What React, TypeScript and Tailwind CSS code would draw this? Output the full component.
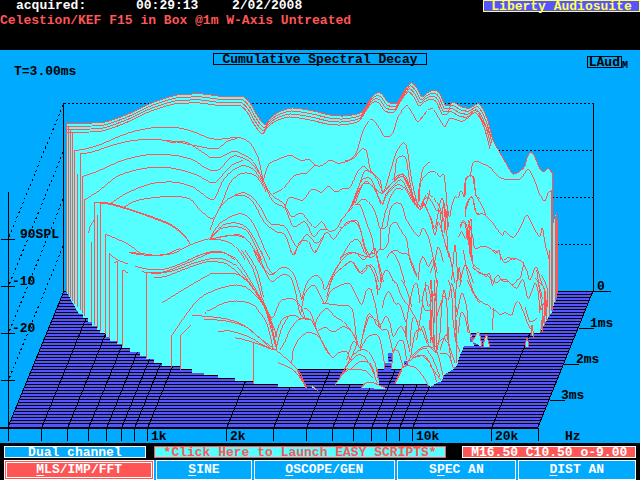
import React from "react";

const RED = "#ff5555";
const CYAN = "#55ffff";
const INDIGO = "#5555ff";

type Point = [number, number];

function parse(points: string): Point[] {
  return points
    .trim()
    .split(/\s+/)
    .map((pair) => pair.split(",").map(Number) as Point);
}

/** Catmull-Rom curve through every point of a "x,y x,y" list. */
function smooth(points: string): string {
  const p = parse(points);
  let d = `M${p[0][0]} ${p[0][1]}`;
  for (let i = 0; i < p.length - 1; i++) {
    const a = p[Math.max(i - 1, 0)];
    const b = p[i];
    const c = p[i + 1];
    const e = p[Math.min(i + 2, p.length - 1)];
    d += `C${b[0] + (c[0] - a[0]) / 7} ${b[1] + (c[1] - a[1]) / 7} ${c[0] - (e[0] - b[0]) / 7} ${c[1] - (e[1] - b[1]) / 7} ${c[0]} ${c[1]}`;
  }
  return d;
}

const RIDGE =
  "66,123 93,123 105,122 118,118 133,112 147,105 160,100 177,95 192,94 203,94 218,96 230,97 238,96 244,97 250,103 257,115 265,125 270,119 277,113 292,108 313,111 330,115 343,116 357,114 363,111 372,97 377,93 382,94 388,102 397,103 403,93 411,83 417,88 422,97 427,93 435,90 440,94 445,105 450,105 453,102 462,107 470,108 479,104 487,118 493,140 499,151 507,165 513,174 520,171 525,166 527,158 531,152 535,157 539,167 544,172 548,168 552,173";

const LOWER_EDGE =
  "553,225 556,213 557,230 557,292 552,312 545,323 540,333 471,333 473,341 474,346 464,346 463,349 460,355 457,366 452,370 444,375 442,381 437,383 430,387 428,384 395,384 402,369 377,369 379,384 335,384 347,369 297,369 307,388 302,387 278,387 278,384 253,384 253,381 235,381 235,378 218,378 218,375 204,375 204,373 192,373 192,369 181,369 181,366 162,366 162,363 154,363 154,359 146,359 146,356 140,356 140,352 130,352 130,348 122,348 122,344 117,344 117,341 110,341 110,337 106,337 106,333 100,333 100,330 97,330 97,326 92,326 92,322 88,322 88,318 83,318 83,314 79,314 75,307 70,298 66,291";

const SILHOUETTE = `${smooth(RIDGE)}L${LOWER_EDGE.split(" ").join("L")}Z`;

/** Slices of the decay, grouped by the origin of their plot tile; three units per screen dot. */
const SLICES: { origin: Point; curves: string[] }[] = [
  {
    origin: [0, 80],
    curves: [
      "223,212 265,205 310,190 360,168 410,152 470,142 530,143 580,155 620,172 630,175",
      "241,222 280,215 340,195 390,183 450,178 520,184 600,200 630,206",
      "500,184 520,187 545,184 570,192 600,212 630,232",
      "247,290 290,275 350,248 400,232 460,223 530,227 580,240 610,260 630,270",
      "253,360 300,330 350,290 400,272 450,263 500,262 550,272 590,285 630,307",
      "330,372 370,345 420,322 470,308 530,307 580,322 620,352 630,357",
      "370,382 410,362 460,353 520,349 570,357 600,390 630,415",
      "283,367 330,370 390,388 450,408 510,432 550,462 572,493",
      "302,369 330,373 390,390 450,411 510,435 550,465 570,491",
      "265,460 272,437 283,420",
      "317,463 380,490 415,515 430,525",
      "388,518 420,520 470,526 520,520 570,495 620,478 630,478",
      "565,540 600,525 630,516",
    ],
  },
  {
    origin: [0, 250],
    curves: [
      "329,12 350,28 385,43",
      "343,38 355,32",
      "367,60 385,70",
      "388,8 420,14 460,16 500,12 540,-5",
      "405,48 440,57 490,58 540,42 600,15 630,8",
      "425,65 470,70 520,62 580,40 630,26",
      "463,84 500,78 560,55 610,38 630,33",
      "440,67 490,66 530,52 600,22 630,8",
      "487,158 540,125 590,95 630,73",
      "515,258 540,220 580,165 610,137 630,127",
      "542,255 572,225",
      "575,197 605,198 630,201",
      "613,193 622,183 630,180",
      "613,210 630,210",
    ],
  },
  {
    origin: [210, 80],
    curves: [
      "0,175 25,178 70,173 100,176 125,195 145,235 160,300 185,345 220,370 245,410 275,400 312,442 335,425 355,452 378,448 400,412 430,380",
      "0,206 25,205 50,185 80,176",
      "160,300 175,255 200,240 240,226 270,240 300,240 315,256 335,257 360,241 385,250 420,240 440,215 460,150 485,118 505,140 525,170 548,160 565,110 590,77 610,105 625,125 645,100",
      "190,342 220,325 250,290 270,282 290,280 315,256",
      "405,242 430,235 455,208 470,215 483,275 510,300 520,340 545,260 560,215 580,188 592,210 605,300 625,385",
      "225,378 240,352 278,360 305,328 335,337 355,318 378,336 400,325 420,322 440,280 460,259 482,278",
      "0,232 30,232 70,214 95,222 130,245 160,305",
      "0,270 25,270 60,235 80,228 120,245 155,290",
      "0,307 20,305 60,260 100,240",
      "0,357 15,355 40,300 70,270 100,257 130,268 160,310 190,365 225,385 250,440 285,425 310,470 330,450 355,450",
      "0,415 15,410 35,370 60,310 85,285 110,279 140,290 170,335",
      "0,450 20,400 45,365 75,347 110,350 135,375 165,430 200,455 225,465 250,525 270,485 295,485 315,518 345,460",
      "75,345 100,338 125,350 150,380 180,430 225,440 260,500 290,463 320,490 350,458 370,478 385,460 400,440 430,422 445,428 465,500 480,530",
      "0,475 30,430 80,403 110,407 135,440 165,510 182,540",
      "0,475 40,435 85,430 120,455 165,540",
      "0,478 35,445 90,442 120,465 155,540",
      "0,478 40,470 90,465 120,490 150,540",
      "0,478 50,467 80,467 110,478 140,520 150,545",
      "0,478 20,478 60,488 90,515 105,540",
      "0,515 40,517 75,540",
      "553,305 560,240 580,228 590,245 600,310 615,375",
      "627,365 632,300 640,265 660,245",
      "545,300 575,283 595,315 610,360 625,378",
      "645,380 655,350 660,330",
    ],
  },
  {
    origin: [210, 250],
    curves: [
      "130,0 150,40 165,60 185,75 210,55 225,52 250,70 270,130 275,150",
      "140,0 165,62 185,95 215,75 240,80 255,120 270,190 285,205",
      "152,0 175,55 190,70 205,60",
      "240,0 250,13 258,0",
      "305,0 314,8 318,0",
      "0,8 40,8 80,30 120,90 160,160 190,230 200,260",
      "0,25 40,27 80,50 120,100 160,165 185,210",
      "0,33 50,42 90,75 125,110 165,175 190,240",
      "95,0 130,60 155,140 180,200",
      "105,0 140,60 160,140",
      "0,72 70,70 110,90 150,145 175,195 200,290",
      "0,127 30,115 80,105 120,120 160,165 180,225 200,300",
      "0,180 40,160 80,153 130,165 170,220 190,300",
      "0,200 50,207 100,225 150,265 200,302 245,340 270,370 290,415",
      "0,208 60,215 110,232 150,265 180,295",
      "25,245 60,243 110,258 150,280 190,300",
      "75,263 130,277 190,300",
      "205,338 250,360 275,390 290,415",
      "245,340 250,300 265,270 290,248 310,250 330,265 365,320 385,308 410,305 420,330",
      "210,300 225,275 240,240 265,210 300,208 320,240 345,295 365,320",
      "195,260 215,210 250,195 270,205 300,208",
      "200,290 215,235 235,200",
      "175,195 190,200 210,155 235,146 255,150 275,175 285,205",
      "275,150 290,100 315,76 335,90 345,120 365,80 400,25 430,8 470,20 490,5",
      "272,190 285,130 310,105 325,125 345,160 365,120 415,100 435,130 455,163 470,120 485,118",
      "335,160 380,165 425,175 440,270 450,295",
      "282,175 300,185 320,240",
      "315,225 325,200 350,175 375,200 400,215 425,245 440,275",
      "320,245 345,232 370,246 400,230 425,245 440,280 420,330",
      "350,140 370,80 400,50 425,35 450,68 475,45 495,80 503,135",
      "355,120 375,60 405,20 430,5",
      "375,404 385,390 400,370 412,355",
    ],
  },
  {
    origin: [340, 170],
    curves: [
      "0,155 30,115 60,40 75,25 95,30 125,100 140,70 180,30 200,55 225,100 240,118 255,100",
      "35,110 60,55 80,35 110,60 128,70 150,45 185,20 205,50 225,95",
      "40,105 70,10 85,3 105,15 130,65 155,40 185,12 200,25 215,70 240,110",
      "45,100 70,42 100,50 125,103 140,75 170,45 195,55 215,90 238,118",
      "120,240 122,180 140,170 150,120 165,100 185,105 200,150 235,200 248,175 265,200 280,265 290,340",
      "50,105 65,88 85,95 105,125 122,178 135,130 150,85 170,55 190,60",
      "45,105 62,108 80,160 95,200 105,250",
      "118,240 135,235 145,215 150,170 168,157 185,185 200,210 210,270 230,320",
      "140,265 155,245 175,275 195,340",
      "150,250 165,240 185,250 205,255 230,315",
      "235,330 240,280 250,260 265,290 280,265 292,310",
      "270,310 285,270 295,230 310,275",
      "0,175 25,155 45,155 62,180 70,220 85,260 105,235 118,300 125,340",
      "0,270 30,220 55,210 75,250 95,262 118,240",
      "0,265 25,248 50,250 70,270 95,250 110,260 130,335",
      "0,300 35,275 65,310 90,285 105,300 115,335",
      "120,335 140,300 165,340",
      "235,95 240,40 265,8 285,5 300,20 312,15 320,90 325,170",
      "245,110 262,72 290,95 305,130 320,190 325,260",
      "240,118 250,90 268,85 288,120 300,125 306,180 320,240",
      "255,105 275,150 285,175 300,100 308,85 315,140",
      "250,100 270,140 285,195 295,155 310,200 328,265",
      "305,180 308,120 312,100 318,150 312,190 322,120 324,180",
      "318,90 328,140 335,110 345,80 355,85 362,62 372,80",
      "375,75 378,25 392,18 403,25 407,75 420,85",
      "375,140 380,100 397,82 405,120 420,135",
      "356,200 365,185 378,205 386,165 395,150 395,240 400,290",
      "360,175 366,155 376,165 384,210 386,180 392,250",
      "362,170 372,152 385,185 388,240 398,280",
      "388,160 390,200 394,260 400,285",
      "335,330 345,225 352,300 360,330 375,285 390,310 400,340",
      "328,250 338,300 345,340",
      "350,340 358,290 362,340",
      "400,285 420,300",
    ],
  },
  {
    origin: [340, 280],
    curves: [
      "60,205 80,115 92,103 115,140 125,130 138,108 150,130 160,170 175,145 185,140 195,160 210,215",
      "65,180 85,115 100,115 118,130 125,150 142,150 152,185 158,215",
      "60,210 85,170 115,168 130,230 135,265",
      "92,28 105,70 118,145",
      "20,240 40,185 60,205",
      "0,290 30,245 55,225 75,232 95,265 112,310",
      "10,275 35,230 62,210 85,215 105,250 115,300",
      "30,270 60,245 90,250 105,285",
      "10,282 30,268 75,272 100,295",
      "155,265 160,215 175,215 190,265",
      "160,215 175,185 190,185 200,240",
      "165,312 185,265 200,258 225,262 250,290 265,318",
      "190,265 210,235 235,210 260,198 290,215 310,290",
      "205,245 240,225 270,250 290,305",
      "215,235 250,205 275,230 300,290",
      "215,235 255,228 280,270 302,300",
      "108,0 112,20 118,30 125,0",
      "127,85 135,50 148,35 165,70 180,75 195,120 200,135 200,180",
      "155,0 170,10 185,50 210,85 235,130",
      "185,0 200,30 215,80",
      "195,160 205,90 220,20 232,15 240,70",
      "210,200 215,130 225,110 240,150 250,140 265,190",
      "212,230 225,160 245,150 262,190 285,215",
      "230,180 245,90 250,40 262,15 272,60 270,150 285,210",
      "245,60 255,90 275,100 272,190",
      "255,5 265,80 285,40 280,170 290,215 290,60 292,0",
      "275,0 278,90 284,200",
      "270,0 278,80 270,110 278,180 285,60 282,0",
      "290,215 300,160 305,80 312,30 322,90 325,180 345,250",
      "290,110 310,50 325,60 335,10 348,80 345,170 360,215",
      "300,210 320,165 335,250 345,265",
      "300,220 325,225 340,265",
      "285,200 310,175 325,190 325,140",
      "325,0 335,40 340,130 352,190",
      "346,100 350,150 350,250",
      "350,110 365,40 380,80 385,140 400,190",
      "355,160 362,100 375,110 385,160",
      "350,0 345,80 350,140",
      "358,20 365,0",
      "382,0 400,40 418,68",
    ],
  },
  {
    origin: [420, 80],
    curves: [
      "0,118 30,86 45,95 60,120 75,140 90,115 125,124 150,108 160,92 175,98 190,128 215,172",
      "152,290 155,260 165,243 185,250 210,262 235,290 260,298 300,298 325,268 345,305 358,340 374,363 385,337 395,335",
      "133,350 135,310 145,290 158,292 168,345 185,375 198,405",
      "135,400 145,365 157,350 170,400 190,402 215,425 245,465 255,455 280,472 300,445 320,405 335,430 358,470 367,443 375,490 388,540",
      "145,420 158,470 165,505 190,498 215,508 228,520 237,510 243,540",
      "253,540 265,533 285,540",
    ],
  },
  {
    origin: [420, 250],
    curves: [
      "215,0 235,8 255,38 280,25 305,35 320,60 330,90 348,50 362,90 375,130 375,180",
      "155,50 175,65 190,72 200,80 208,68 217,105 225,85 235,75 245,92 265,95 280,105 292,90 302,80 312,35",
      "160,55 180,70 200,75 215,90 230,98 245,88 260,90 275,104 290,115 300,100 310,90 325,145 345,100 355,130 360,190",
      "130,0 145,80 165,135 190,160 205,165 215,178 228,182 240,195 255,188 275,195 285,165 295,155 310,185 325,225 335,240",
      "350,60 360,130 368,180 362,245",
      "345,85 362,100 376,130 370,220",
      "365,75 382,120 380,190",
      "217,240 220,190 222,175",
      "315,170 330,215 350,205",
      "352,90 366,140 362,180 378,150 374,210",
    ],
  },
];

/** Left edge of each slice: x, top and bottom in screen dots. */
const EDGES: [number, number, number][] = [
  [66, 123, 292], [68, 127, 295], [70, 130, 298], [72, 133, 301], [74, 150, 304],
  [77, 174, 307], [80, 154, 310], [82, 176, 313], [84, 200, 316], [91, 242, 322],
  [94, 202, 325], [97, 215, 328], [100, 202, 331], [105, 234, 334], [109, 253, 338],
  [117, 261, 343], [122, 270, 346], [146, 272, 358], [171, 336, 367], [180, 335, 370],
  [253, 343, 384], [542, 310, 332], [544, 290, 325], [546, 300, 320], [549, 250, 316],
  [551, 190, 311], [552, 172, 310], [555, 216, 302], [556, 212, 298], [557, 220, 293],
];

const TICKS = [41, 67, 88, 106, 121, 134, 147, 226, 273, 306, 332, 353, 371, 386, 399, 412, 491];
const FLOOR_ROWS = Array.from({ length: 45 }, (_, i) => 291 + i * 3);

const SPIKES = [
  "472,341 475,337 478,332 480,336 482,347",
  "483,347 486,335 488,340 490,347",
  "525,347 527,338 529,347",
  "531,335 532,325 534,338",
  "361,388 366,383 374,383 387,389",
  "311,387 313,386 318,391",
];

const LABELS: [number, number, string][] = [
  [20, 238, "90SPL"], [12, 285, "-10"], [12, 332, "-20"],
  [151, 440, "1k"], [230, 440, "2k"], [416, 440, "10k"], [495, 440, "20k"], [565, 440, "Hz"],
  [597, 290, "0"], [590, 327, "1ms"], [576, 363, "2ms"], [561, 399, "3ms"],
];

function DecayPlot() {
  return (
    <svg viewBox="0 80 640 363" className="block h-auto w-full" role="img" aria-label="Cumulative spectral decay waterfall">
      <defs>
        <clipPath id="body">
          <path d={SILHOUETTE} />
        </clipPath>
        <clipPath id="floor">
          <path d="M64 291H593L538 428H8Z" />
        </clipPath>
      </defs>
      <g shapeRendering="crispEdges" fill="none" stroke="#000">
        <path d="M64 291H593L538 428H8Z" fill={INDIGO} stroke="none" />
        <g clipPath="url(#floor)">
          {FLOOR_ROWS.map((y) => (
            <path key={y} d={`M0 ${y + 0.5}H640`} />
          ))}
          {TICKS.map((x) => (
            <path key={x} d={`M${x + 1} 427l55 -136`} />
          ))}
        </g>
        <path d="M63.5 103V291M593.5 103V291M8.5 192V441M64 291L8 427M593 291L538 427" />
        <path d="M0 427.5H538" strokeWidth="2" />
        <path d="M1 239.5H15M1 286.5H15M1 333.5H15M1 380.5H15" />
        <path d="M593 291.5H611M579 328.5H594M564 364.5H579M550 400.5H565M538.5 428V441" />
        <path d={TICKS.map((x) => `M${x + 0.5} 428V441`).join("")} />
        <path strokeDasharray="2 2" d="M64 103.5H593M490 150.5H593M540 197.5H593M545 244.5H593" />
        <path strokeDasharray="2 3" d="M63 105L9 237M63 152L9 285M63 199L9 332M63 246L9 379" />
        <path d={SILHOUETTE} fill={CYAN} stroke="none" />
        <path d="M388 353h4v9h-4zM385 363h6v7h-7zM404 361h4v4h-4zM470 337h3v5h-3z" fill={INDIGO} stroke="none" />
        <path d="M388 357.5h3M389 360.5h3M385 366.5h6M405 363.5h2" />
        <g stroke={RED}>
          <path d={smooth(RIDGE)} />
          <g clipPath="url(#body)">
            {[1, 2, 3].map((n) => (
              <path key={n} d={smooth(RIDGE.slice(0, RIDGE.indexOf(" 499,")))} transform={`translate(${-n} ${n * 3})`} />
            ))}
          </g>
          {SLICES.map(({ origin, curves }, i) => (
            <g key={i} transform={`translate(${origin[0]} ${origin[1]}) scale(.33333)`} strokeWidth="3">
              {curves.map((curve) => (
                <path key={curve} d={smooth(curve)} />
              ))}
            </g>
          ))}
          {EDGES.map(([x, top, bottom]) => (
            <path key={x} d={`M${x + 0.5} ${top}V${bottom}`} />
          ))}
          {SPIKES.map((spike) => (
            <path key={spike} d={smooth(spike)} fill={CYAN} />
          ))}
          <path d="M297 370L306 388M402 370L395 384M377 369L378 378" />
        </g>
      </g>
      <g className="font-['Liberation_Mono',monospace] text-[13px] font-bold" fill="#000">
        {LABELS.map(([x, y, label]) => (
          <text key={label} x={x} y={y}>
            {label}
          </text>
        ))}
      </g>
    </svg>
  );
}

const MODES = [
  { before: "", key: "M", after: "LS/IMP/FFT", grow: "grow-[151]" },
  { before: "", key: "S", after: "INE", grow: "grow-[94]" },
  { before: "", key: "O", after: "SCOPE/GEN", grow: "grow-[142]" },
  { before: "S", key: "P", after: "EC AN", grow: "grow-[118]" },
  { before: "", key: "D", after: "IST AN", grow: "grow-[118]" },
];

export default function App() {
  return (
    <main className="bg-black font-['Liberation_Mono',monospace] text-[13px] leading-3 font-bold whitespace-pre text-white">
      <header className="h-[50px]">
        <div className="flex items-start pl-4">
          <span className="w-[120px]">acquired:</span>
          <span className="w-24">00:29:13</span>
          <span>2/02/2008</span>
          <span className="ml-auto h-3 w-[157px] border border-[#ffff55] bg-[#5555ff] text-center text-[#ffff55]">
            Liberty Audiosuite
          </span>
        </div>
        <p className="pt-[3px] text-[#ff5555]">Celestion/KEF F15 in Box @1m W-Axis Untreated</p>
      </header>

      <section className="bg-[#00aaff] text-black">
        <div className="grid h-[30px] grid-cols-3 pt-[3px]">
          <span className="self-end pb-0.5 pl-3.5">T=3.00ms</span>
          <h1 className="h-3 self-start border border-black text-center">Cumulative Spectral Decay</h1>
          <div className="mt-[3px] mr-3 flex items-start justify-end">
            <span className="h-3 border border-black px-px">LAud</span>
            <span className="pt-1 text-[10px]">M</span>
          </div>
        </div>
        <DecayPlot />
      </section>

      <div className="flex px-1 pt-[3px] pb-0.5 text-center">
        <span className="mr-2 h-3 grow-[141] basis-0 border border-white bg-[#00aaff]">Dual channel</span>
        <button className="mr-4 h-3 grow-[293] basis-0 border border-[#ff5555] bg-[#55ffff] text-[#ff5555]">
          *Click Here to Launch EASY SCRIPTS*
        </button>
        <span className="h-3 grow-[173] basis-0 border border-white bg-[#ff5555]">M16.50 C10.50 o-9.00</span>
      </div>

      <nav className="mx-1 flex h-5 gap-0.5 bg-[#00aaff]">
        {MODES.map((mode, i) => (
          <button
            key={mode.after}
            aria-pressed={i === 0}
            className={`${mode.grow} basis-0 border border-white p-px ${i === 0 ? "bg-[#ff5555]" : "bg-[#00aaff]"}`}
          >
            <span className={`flex h-4 items-center justify-center border ${i === 0 ? "border-white" : "border-transparent"}`}>
              {mode.before}
              <u className="underline-offset-2">{mode.key}</u>
              {mode.after}
            </span>
          </button>
        ))}
      </nav>
    </main>
  );
}
